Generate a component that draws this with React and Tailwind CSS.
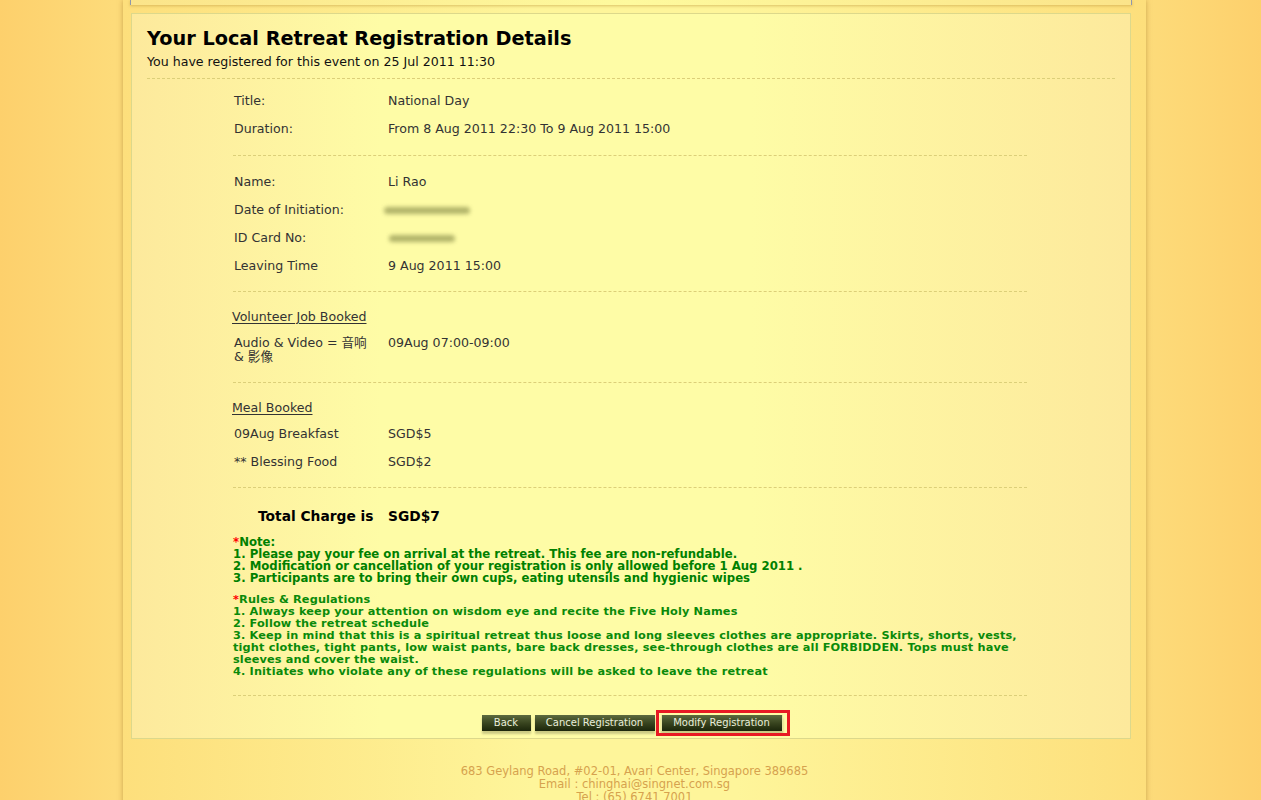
import React from "react";

const font = { fontFamily: '"DejaVu Sans", "Noto Sans CJK SC", sans-serif' };

const Row = ({ label, children }) => (
  <div className="flex py-[7px] leading-[14px]">
    <div className="w-[155px] shrink-0 pl-[1px]">{label}</div>
    <div>{children}</div>
  </div>
);

const Blur = ({ w, ml }) => (
  <span
    className={`inline-block h-[7px] ${w} ${ml} rounded-full bg-[#9ea15a] opacity-80 blur-[2px] align-middle`}
  ></span>
);

const Btn = ({ children, w, className = "" }) => (
  <button
    className={`block h-[16px] ${w} bg-gradient-to-b from-[#5d6b3f] via-[#39451f] to-[#1c260b] text-[10px] leading-[16px] text-[#e9eedb] shadow-[0_3px_2px_rgba(110,110,70,0.35)] ${className}`}>
    {children}
  </button>
);

const App = () => {
  return (
    <div
      style={font}
      className="min-h-screen bg-[linear-gradient(to_right,#fdd06c_0%,#fddb7a_9%,#fddb7a_91%,#fdd06c_100%)]">
      <div className="ml-[123px] w-[1023px] min-h-[830px] bg-[linear-gradient(to_right,#fddf7c_0%,#fef59a_40%,#fef59a_60%,#fddf7c_100%)] shadow-[0_0_5px_rgba(160,120,40,0.55)]">
        {/* strip left over from the panel above */}
        <div className="ml-[7px] w-[1002px] h-[5px] border-x border-[#8f97ab] bg-[linear-gradient(to_right,#fbe48a,#fefa9e,#fbe48a)] shadow-[0_1px_3px_rgba(190,150,60,0.55)]"></div>

        {/* registration card */}
        <div className="ml-[8px] mt-[8px] w-[1000px] border border-[#dcd88b] bg-[linear-gradient(to_right,#fde99c_0%,#fefca6_25%,#fefca6_62%,#fde99c_100%)] px-[15px] pt-[13px] pb-[7px]">
          <h1 className="text-[19.3px] font-bold leading-[24px] text-black">
            Your Local Retreat Registration Details
          </h1>
          <p className="mt-[3px] text-[12.6px] leading-[16px] text-[#111]">
            You have registered for this event on 25 Jul 2011 11:30
          </p>
          <div className="mt-[8px] border-t border-dashed border-[#dccf79]"></div>

          <div className="ml-[86px] w-[794px] text-[12.6px] text-[#333]">
            <div className="pt-[8px] pb-[12px]">
              <Row label="Title:">National Day</Row>
              <Row label="Duration:">From 8 Aug 2011 22:30 To 9 Aug 2011 15:00</Row>
            </div>
            <div className="border-t border-dashed border-[#dccf79] pt-[12px] pb-[11px]">
              <Row label="Name:">Li Rao</Row>
              <Row label="Date of Initiation:">
                <Blur w="w-[86px]" ml="ml-[-4px]" />
              </Row>
              <Row label="ID Card No:">
                <Blur w="w-[66px]" ml="ml-[1px]" />
              </Row>
              <Row label="Leaving Time">9 Aug 2011 15:00</Row>
            </div>
            <div className="border-t border-dashed border-[#dccf79] pt-[18px] pb-[11px]">
              <div className="leading-[14px] underline underline-offset-2 -ml-[1px]">
                Volunteer Job Booked
              </div>
              <div className="mt-[5px]">
                <Row
                  label={
                    <>
                      Audio &amp; Video = 音响
                      <br />
                      &amp; 影像
                    </>
                  }>
                  09Aug 07:00-09:00
                </Row>
              </div>
            </div>
            <div className="border-t border-dashed border-[#dccf79] pt-[18px] pb-[11px]">
              <div className="leading-[14px] underline underline-offset-2 -ml-[1px]">
                Meal Booked
              </div>
              <div className="mt-[5px]">
                <Row label="09Aug Breakfast">SGD$5</Row>
                <Row label="** Blessing Food">SGD$2</Row>
              </div>
            </div>
            <div className="border-t border-dashed border-[#dccf79] pt-[19px] pb-[17px]">
              <div className="flex text-[13.8px] font-bold leading-[18px] text-black">
                <div className="w-[155px] pl-[25px]">Total Charge is</div>
                <div>SGD$7</div>
              </div>

              <div className="mt-[11px] text-[11.7px] font-bold leading-[12px] text-[#008000] whitespace-nowrap">
                <div>
                  <span className="text-[#ff0000]">*</span>Note:
                </div>
                <div>1. Please pay your fee on arrival at the retreat. This fee are non-refundable.</div>
                <div>2. Modification or cancellation of your registration is only allowed before 1 Aug 2011 .</div>
                <div>3. Participants are to bring their own cups, eating utensils and hygienic wipes</div>
              </div>

              <div className="mt-[10px] text-[11.3px] font-bold leading-[12px] tracking-[0.15px] text-[#0a8a0a] whitespace-nowrap">
                <div>
                  <span className="text-[#ff0000]">*</span>Rules &amp; Regulations
                </div>
                <div>1. Always keep your attention on wisdom eye and recite the Five Holy Names</div>
                <div>2. Follow the retreat schedule</div>
                <div>
                  3. Keep in mind that this is a spiritual retreat thus loose and long sleeves clothes are appropriate. Skirts, shorts, vests,
                  <br />
                  tight clothes, tight pants, low waist pants, bare back dresses, see-through clothes are all FORBIDDEN. Tops must have
                  <br />
                  sleeves and cover the waist.
                </div>
                <div>4. Initiates who violate any of these regulations will be asked to leave the retreat</div>
              </div>
            </div>
            <div className="border-t border-dashed border-[#dccf79]"></div>
          </div>

          <div className="flex items-start justify-center pt-[19px] pl-[2px]">
            <Btn w="w-[49px]">Back</Btn>
            <Btn w="w-[120px]" className="ml-[4px]">
              Cancel Registration
            </Btn>
            <div className="relative ml-[6px]">
              <Btn w="w-[122px]" className="border-x border-[#e8e6a0]">
                Modify Registration
              </Btn>
              <div className="absolute -left-[5px] -right-[7px] -top-[5px] -bottom-[5px] border-[3px] border-[#e81a24]"></div>
            </div>
          </div>
        </div>

        <div className="pt-[26px] text-center text-[11.5px] leading-[13px] text-[#d6a24e]">
          <div>683 Geylang Road, #02-01, Avari Center, Singapore 389685</div>
          <div>Email : chinghai@singnet.com.sg</div>
          <div>Tel : (65) 6741 7001</div>
        </div>
      </div>
    </div>
  );
};

export default App;
